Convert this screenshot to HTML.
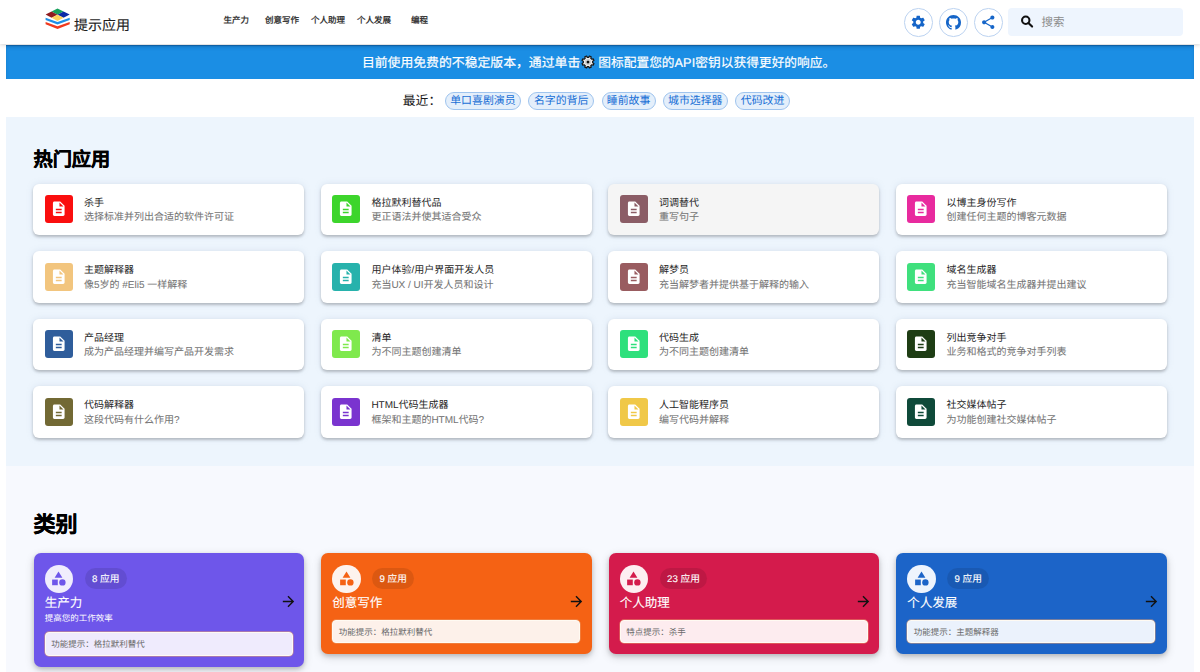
<!DOCTYPE html>
<html lang="zh-CN"><head><meta charset="utf-8">
<style>
*{box-sizing:border-box;margin:0;padding:0}
html,body{width:1200px;height:672px;overflow:hidden;background:#fff;text-rendering:geometricPrecision;font-family:"Liberation Sans",sans-serif;}
.abs{position:absolute}
#hdr{position:absolute;left:0;top:0;width:1200px;height:44px;background:#fff;box-shadow:0 1px 4px rgba(0,0,0,.18);z-index:5}
.logo-t{position:absolute;left:74px;top:15px;font-size:14px;font-weight:500;line-height:20px;color:#1e1e1e;white-space:nowrap;-webkit-text-stroke:0.12px #1e1e1e}
.nav{position:absolute;top:14px;font-size:8.5px;line-height:12px;font-weight:bold;color:#3a3a3a;white-space:nowrap}
.cbtn{position:absolute;top:8px;width:28.5px;height:28.5px;border:1.2px solid #bcd3f1;border-radius:50%;background:#fff}
.cbtn svg{position:absolute;fill:#1565c8}
#search{position:absolute;left:1008px;top:8px;width:175px;height:28px;background:#eef5fe;border-radius:4px}
#banner{position:absolute;left:5.7px;top:44.8px;width:1188.4px;height:33.9px;background:#1b8ee4;box-shadow:inset 0 1px 1px rgba(0,40,90,.3),inset 0 3px 4px -1px rgba(0,40,90,.15)}
#banner .t{position:absolute;top:10.5px;font-size:12.7px;line-height:16px;color:#fff;white-space:nowrap;font-weight:500;-webkit-text-stroke:0.18px #fff}
#recent{position:absolute;left:402.8px;top:92.1px;font-size:12.8px;line-height:17px;color:#1a1a1a;white-space:nowrap}
.chip{position:absolute;top:92.2px;height:17.6px;border:1px solid #9fc4ee;background:#e4effb;border-radius:9px;color:#1a70d6;font-size:10.9px;line-height:17.8px;-webkit-text-stroke:0.03px #1a70d6;text-align:center;white-space:nowrap}
#sec1{position:absolute;left:6px;top:117px;width:1188px;height:348.5px;background:#edf5fd}
#sec2{position:absolute;left:6px;top:465.5px;width:1188px;height:220px;background:#f7f9fe}
.h2{position:absolute;font-weight:bold;color:#000;white-space:nowrap;-webkit-text-stroke:0.35px #000}
.card{position:absolute;width:271px;height:51.5px;background:#fff;border-radius:6px;box-shadow:0 2px 3px rgba(0,0,0,.22),0 0 6px rgba(160,175,200,.25)}
.card.hov{background:#f5f5f5}
.card .ic{position:absolute;left:11.5px;top:11.2px;width:28px;height:28px;border-radius:3px}
.card .ic svg{position:absolute;left:4.8px;top:5px;width:17.5px;height:17.5px;fill:#fff}
.card .tt{position:absolute;left:50.6px;top:13px;font-size:10px;line-height:14px;color:#262626;white-space:nowrap}
.card .ds{position:absolute;left:50.6px;top:27.6px;font-size:10px;line-height:14px;color:#747474;-webkit-text-stroke:0.05px #747474;white-space:nowrap}
.cat{position:absolute;top:553px;width:270.7px;height:100.5px;border-radius:7px;box-shadow:0 3px 10px rgba(0,0,0,.16),0 2px 4px rgba(0,0,0,.16)}
.cat .circ{position:absolute;left:11.3px;top:11.6px;width:28.4px;height:28.4px;border-radius:50%}
.cat .circ svg{position:absolute;left:5.34px;top:5.7px;width:17px;height:17px}
.cat .pill{position:absolute;left:51px;top:14.8px;height:21.5px;padding:0 7.35px;border-radius:11px;background:rgba(0,0,0,.1);color:#fff;font-size:9.7px;line-height:23.5px;white-space:nowrap;-webkit-text-stroke:0.12px #fff}
.cat .ct{position:absolute;left:11px;top:40.5px;font-size:12.5px;line-height:18px;color:#fff;white-space:nowrap;-webkit-text-stroke:0.12px #fff}
.cat .cd{position:absolute;left:11px;top:59.3px;font-size:8.5px;line-height:12px;color:#fff;white-space:nowrap}
.cat .arr{position:absolute;left:246.4px;top:39.7px;width:17px;height:17px}
.cat .tip{position:absolute;left:11.3px;width:248px;height:23.5px;border-radius:4px;font-size:8.5px;line-height:22px;color:#6a6a6a;padding-left:5.2px;white-space:nowrap;border:1px solid #fffaf2;box-shadow:0 0 0 .7px rgba(235,160,110,.6)}
</style></head><body>
<div id="hdr">
  <svg class="abs" style="left:40px;top:5px" width="35" height="28" viewBox="40 5 35 28">
    <polygon points="45.6,17.7 57.5,22 69.7,17.7 69.7,20.1 57.5,24.6 45.6,20.1" fill="#1e8fe6"/>
    <polygon points="45.6,21.9 57.5,26.3 69.7,21.9 69.7,24.3 57.5,29 45.6,24.3" fill="#f03a1e"/>
    <polygon points="57.5,8.4 63.55,11.4 57.5,14.65 51.55,11.4" fill="#16a05c"/>
    <polygon points="63.55,11.4 69.7,14.4 63.55,17.65 57.5,14.65" fill="#0b2aa6"/>
    <polygon points="51.55,11.4 57.5,14.65 51.55,17.65 45.6,14.4" fill="#8e1b1f"/>
    <polygon points="57.5,14.65 63.55,17.65 57.5,20.9 51.55,17.65" fill="#fdd35c"/>
  </svg>
  <div class="logo-t">提示应用</div>
  <div class="nav" style="left:223.5px">生产力</div>
  <div class="nav" style="left:265px">创意写作</div>
  <div class="nav" style="left:311px">个人助理</div>
  <div class="nav" style="left:357px">个人发展</div>
  <div class="nav" style="left:411px">编程</div>
  <div class="cbtn" style="left:904px"><svg style="left:5px;top:5px" width="16.5" height="16.5" viewBox="0 0 24 24"><path d="M19.14 12.94c.04-.3.06-.61.06-.94 0-.32-.02-.64-.07-.94l2.03-1.58c.18-.14.23-.41.12-.61l-1.92-3.32c-.12-.22-.37-.29-.59-.22l-2.39.96c-.5-.38-1.030-.7-1.62-.94l-.36-2.54c-.04-.24-.24-.41-.48-.41h-3.84c-.24 0-.43.17-.47.41l-.36 2.54c-.59.24-1.13.57-1.62.94l-2.39-.96c-.22-.08-.47 0-.59.22L2.74 8.87c-.12.21-.08.47.12.61l2.030 1.58c-.05.3-.09.63-.09.94s.02.64.07.94l-2.03 1.58c-.18.14-.23.41-.12.61l1.92 3.32c.12.22.37.29.59.22l2.39-.96c.5.38 1.03.7 1.62.94l.36 2.54c.05.24.24.41.48.41h3.84c.24 0 .44-.17.47-.41l.36-2.54c.59-.24 1.13-.56 1.62-.94l2.39.96c.22.08.47 0 .59-.22l1.92-3.32c.12-.22.07-.47-.12-.61l-2.01-1.58zM12 15.6c-1.98 0-3.6-1.62-3.6-3.6s1.62-3.6 3.6-3.6 3.6 1.62 3.6 3.6-1.620 3.6-3.6 3.6z"/></svg></div>
  <div class="cbtn" style="left:939px"><svg style="left:5.9px;top:5.9px" width="15" height="15" viewBox="0 0 16 16"><path d="M8 0C3.58 0 0 3.58 0 8c0 3.54 2.29 6.53 5.470 7.59.4.07.55-.17.55-.38 0-.19-.01-.82-.01-1.49-2.01.37-2.53-.49-2.69-.94-.09-.23-.48-.94-.82-1.13-.28-.15-.68-.52-.01-.53.63-.01 1.08.58 1.23.82.72 1.21 1.87.87 2.33.66.07-.52.28-.87.51-1.07-1.78-.2-3.64-.89-3.64-3.95 0-.87.31-1.59.82-2.15-.08-.2-.36-1.02.08-2.12 0 0 .67-.21 2.2.82.64-.18 1.32-.27 2-.27.68 0 1.36.09 2 .27 1.53-1.04 2.2-.82 2.2-.82.44 1.1.16 1.92.08 2.12.51.56.82 1.27.82 2.15 0 3.07-1.87 3.75-3.65 3.95.29.25.54.73.54 1.48 0 1.07-.01 1.93-.01 2.2 0 .21.15.46.55.38A8.013 8.013 0 0016 8c0-4.42-3.58-8-8-8z"/></svg></div>
  <div class="cbtn" style="left:974px"><svg style="left:5px;top:5px" width="16.5" height="16.5" viewBox="0 0 24 24"><path d="M18 16.08c-.76 0-1.44.3-1.96.77L8.91 12.7c.05-.23.09-.46.09-.7s-.04-.47-.09-.7l7.05-4.11c.54.5 1.25.81 2.04.81 1.66 0 3-1.34 3-3s-1.34-3-3-3-3 1.34-3 3c0 .24.04.47.09.7L8.04 9.81C7.5 9.31 6.79 9 6 9c-1.66 0-3 1.34-3 3s1.34 3 3 3c.79 0 1.5-.31 2.040-.81l7.12 4.16c-.05.21-.08.43-.08.65 0 1.61 1.31 2.92 2.92 2.920 1.61 0 2.92-1.31 2.92-2.92s-1.31-2.92-2.92-2.92z"/></svg></div>
  <div id="search">
    <svg class="abs" style="left:0;top:0" width="30" height="28" viewBox="0 0 30 28"><circle cx="17.75" cy="12.25" r="3.7" fill="none" stroke="#111" stroke-width="2.1"/><line x1="20.4" y1="14.9" x2="24.1" y2="18.6" stroke="#111" stroke-width="2.1" stroke-linecap="round"/></svg>
    <div class="abs" style="left:33.4px;top:7px;font-size:11.5px;line-height:16px;color:#8a8a8a">搜索</div>
  </div>
</div>
<div id="banner"><div class="t" style="left:356.2px;font-size:12.85px">目前使用免费的不稳定版本，通过单击</div><svg class="abs" style="left:575.8px;top:10.5px" width="14" height="14" viewBox="0 0 14 14"><path d="M11.70,7.00 L11.64,7.74 L12.93,8.42 L12.20,10.19 L10.80,9.76 L10.32,10.32 L9.76,10.80 L10.19,12.20 L8.42,12.93 L7.74,11.64 L7.00,11.70 L6.26,11.64 L5.58,12.93 L3.81,12.20 L4.24,10.80 L3.68,10.32 L3.20,9.76 L1.80,10.19 L1.07,8.42 L2.36,7.74 L2.30,7.00 L2.36,6.26 L1.07,5.58 L1.80,3.81 L3.20,4.24 L3.68,3.68 L4.24,3.20 L3.81,1.80 L5.58,1.07 L6.26,2.36 L7.00,2.30 L7.74,2.36 L8.42,1.07 L10.19,1.80 L9.76,3.20 L10.32,3.68 L10.80,4.24 L12.20,3.81 L12.93,5.58 L11.64,6.26Z" fill="#ececec" stroke="#161616" stroke-width="1.2" stroke-linejoin="round"/><circle cx="7" cy="7" r="2.6" fill="none" stroke="#c4c4c4" stroke-width=".8"/><circle cx="7" cy="7" r="1.5" fill="#111"/></svg><div class="t" style="left:592.5px;letter-spacing:0.05px">图标配置您的API密钥以获得更好的响应。</div></div>
<div id="recent">最近：</div>
<div class="chip" style="left:444.6px;width:76.6px">单口喜剧演员</div>
<div class="chip" style="left:528.3px;width:65.8px">名字的背后</div>
<div class="chip" style="left:601.5px;width:54.2px">睡前故事</div>
<div class="chip" style="left:662.5px;width:65.5px">城市选择器</div>
<div class="chip" style="left:735.2px;width:54.7px">代码改进</div>

<div id="sec1"></div>
<div class="h2" style="left:33.5px;top:148.6px;font-size:19.2px;line-height:24px">热门应用</div>

<div id="sec2"></div>
<div class="h2" style="left:33.5px;top:511px;font-size:22px;line-height:28px">类别</div>

<div class="card" style="left:33.3px;top:183.9px"><div class="ic" style="background:#fa0e0e"><svg viewBox="0 0 24 24"><path d="M14 2H6c-1.1 0-1.99.9-1.99 2L4 20c0 1.1.89 2 1.99 2H18c1.1 0 2-.9 2-2V8l-6-6zm2 16H8v-2h8v2zm0-4H8v-2h8v2zm-3-5V3.5L18.5 9H13z"/></svg></div><div class="tt">杀手</div><div class="ds">选择标准并列出合适的软件许可证</div></div>
<div class="card" style="left:320.8px;top:183.9px"><div class="ic" style="background:#3dd52c"><svg viewBox="0 0 24 24"><path d="M14 2H6c-1.1 0-1.99.9-1.99 2L4 20c0 1.1.89 2 1.99 2H18c1.1 0 2-.9 2-2V8l-6-6zm2 16H8v-2h8v2zm0-4H8v-2h8v2zm-3-5V3.5L18.5 9H13z"/></svg></div><div class="tt">格拉默利替代品</div><div class="ds">更正语法并使其适合受众</div></div>
<div class="card hov" style="left:608.3px;top:183.9px"><div class="ic" style="background:#8b5d66"><svg viewBox="0 0 24 24"><path d="M14 2H6c-1.1 0-1.99.9-1.99 2L4 20c0 1.1.89 2 1.99 2H18c1.1 0 2-.9 2-2V8l-6-6zm2 16H8v-2h8v2zm0-4H8v-2h8v2zm-3-5V3.5L18.5 9H13z"/></svg></div><div class="tt">词调替代</div><div class="ds">重写句子</div></div>
<div class="card" style="left:895.8px;top:183.9px"><div class="ic" style="background:#e82a9e"><svg viewBox="0 0 24 24"><path d="M14 2H6c-1.1 0-1.99.9-1.99 2L4 20c0 1.1.89 2 1.99 2H18c1.1 0 2-.9 2-2V8l-6-6zm2 16H8v-2h8v2zm0-4H8v-2h8v2zm-3-5V3.5L18.5 9H13z"/></svg></div><div class="tt">以博主身份写作</div><div class="ds">创建任何主题的博客元数据</div></div>
<div class="card" style="left:33.3px;top:251.4px"><div class="ic" style="background:#f2c57e"><svg viewBox="0 0 24 24"><path d="M14 2H6c-1.1 0-1.99.9-1.99 2L4 20c0 1.1.89 2 1.99 2H18c1.1 0 2-.9 2-2V8l-6-6zm2 16H8v-2h8v2zm0-4H8v-2h8v2zm-3-5V3.5L18.5 9H13z"/></svg></div><div class="tt">主题解释器</div><div class="ds">像5岁的 #Eli5 一样解释</div></div>
<div class="card" style="left:320.8px;top:251.4px"><div class="ic" style="background:#27b2ac"><svg viewBox="0 0 24 24"><path d="M14 2H6c-1.1 0-1.99.9-1.99 2L4 20c0 1.1.89 2 1.99 2H18c1.1 0 2-.9 2-2V8l-6-6zm2 16H8v-2h8v2zm0-4H8v-2h8v2zm-3-5V3.5L18.5 9H13z"/></svg></div><div class="tt">用户体验/用户界面开发人员</div><div class="ds">充当UX / UI开发人员和设计</div></div>
<div class="card" style="left:608.3px;top:251.4px"><div class="ic" style="background:#995c60"><svg viewBox="0 0 24 24"><path d="M14 2H6c-1.1 0-1.99.9-1.99 2L4 20c0 1.1.89 2 1.99 2H18c1.1 0 2-.9 2-2V8l-6-6zm2 16H8v-2h8v2zm0-4H8v-2h8v2zm-3-5V3.5L18.5 9H13z"/></svg></div><div class="tt">解梦员</div><div class="ds">充当解梦者并提供基于解释的输入</div></div>
<div class="card" style="left:895.8px;top:251.4px"><div class="ic" style="background:#3fe07d"><svg viewBox="0 0 24 24"><path d="M14 2H6c-1.1 0-1.99.9-1.99 2L4 20c0 1.1.89 2 1.99 2H18c1.1 0 2-.9 2-2V8l-6-6zm2 16H8v-2h8v2zm0-4H8v-2h8v2zm-3-5V3.5L18.5 9H13z"/></svg></div><div class="tt">域名生成器</div><div class="ds">充当智能域名生成器并提出建议</div></div>
<div class="card" style="left:33.3px;top:318.9px"><div class="ic" style="background:#2f5d9b"><svg viewBox="0 0 24 24"><path d="M14 2H6c-1.1 0-1.99.9-1.99 2L4 20c0 1.1.89 2 1.99 2H18c1.1 0 2-.9 2-2V8l-6-6zm2 16H8v-2h8v2zm0-4H8v-2h8v2zm-3-5V3.5L18.5 9H13z"/></svg></div><div class="tt">产品经理</div><div class="ds">成为产品经理并编写产品开发需求</div></div>
<div class="card" style="left:320.8px;top:318.9px"><div class="ic" style="background:#7fe94d"><svg viewBox="0 0 24 24"><path d="M14 2H6c-1.1 0-1.99.9-1.99 2L4 20c0 1.1.89 2 1.99 2H18c1.1 0 2-.9 2-2V8l-6-6zm2 16H8v-2h8v2zm0-4H8v-2h8v2zm-3-5V3.5L18.5 9H13z"/></svg></div><div class="tt">清单</div><div class="ds">为不同主题创建清单</div></div>
<div class="card" style="left:608.3px;top:318.9px"><div class="ic" style="background:#2ee07c"><svg viewBox="0 0 24 24"><path d="M14 2H6c-1.1 0-1.99.9-1.99 2L4 20c0 1.1.89 2 1.99 2H18c1.1 0 2-.9 2-2V8l-6-6zm2 16H8v-2h8v2zm0-4H8v-2h8v2zm-3-5V3.5L18.5 9H13z"/></svg></div><div class="tt">代码生成</div><div class="ds">为不同主题创建清单</div></div>
<div class="card" style="left:895.8px;top:318.9px"><div class="ic" style="background:#1e3d14"><svg viewBox="0 0 24 24"><path d="M14 2H6c-1.1 0-1.99.9-1.99 2L4 20c0 1.1.89 2 1.99 2H18c1.1 0 2-.9 2-2V8l-6-6zm2 16H8v-2h8v2zm0-4H8v-2h8v2zm-3-5V3.5L18.5 9H13z"/></svg></div><div class="tt">列出竞争对手</div><div class="ds">业务和格式的竞争对手列表</div></div>
<div class="card" style="left:33.3px;top:386.4px"><div class="ic" style="background:#726934"><svg viewBox="0 0 24 24"><path d="M14 2H6c-1.1 0-1.99.9-1.99 2L4 20c0 1.1.89 2 1.99 2H18c1.1 0 2-.9 2-2V8l-6-6zm2 16H8v-2h8v2zm0-4H8v-2h8v2zm-3-5V3.5L18.5 9H13z"/></svg></div><div class="tt">代码解释器</div><div class="ds">这段代码有什么作用?</div></div>
<div class="card" style="left:320.8px;top:386.4px"><div class="ic" style="background:#7a34cf"><svg viewBox="0 0 24 24"><path d="M14 2H6c-1.1 0-1.99.9-1.99 2L4 20c0 1.1.89 2 1.99 2H18c1.1 0 2-.9 2-2V8l-6-6zm2 16H8v-2h8v2zm0-4H8v-2h8v2zm-3-5V3.5L18.5 9H13z"/></svg></div><div class="tt">HTML代码生成器</div><div class="ds">框架和主题的HTML代码?</div></div>
<div class="card" style="left:608.3px;top:386.4px"><div class="ic" style="background:#f0c848"><svg viewBox="0 0 24 24"><path d="M14 2H6c-1.1 0-1.99.9-1.99 2L4 20c0 1.1.89 2 1.99 2H18c1.1 0 2-.9 2-2V8l-6-6zm2 16H8v-2h8v2zm0-4H8v-2h8v2zm-3-5V3.5L18.5 9H13z"/></svg></div><div class="tt">人工智能程序员</div><div class="ds">编写代码并解释</div></div>
<div class="card" style="left:895.8px;top:386.4px"><div class="ic" style="background:#0f4a3a"><svg viewBox="0 0 24 24"><path d="M14 2H6c-1.1 0-1.99.9-1.99 2L4 20c0 1.1.89 2 1.99 2H18c1.1 0 2-.9 2-2V8l-6-6zm2 16H8v-2h8v2zm0-4H8v-2h8v2zm-3-5V3.5L18.5 9H13z"/></svg></div><div class="tt">社交媒体帖子</div><div class="ds">为功能创建社交媒体帖子</div></div>
<div class="cat" style="left:33.7px;height:113.5px;background:#6e56ea"><div class="circ" style="background:#f0edfd"><svg viewBox="0 0 24 24"><path fill="#6e56ea" d="M12 2l-5.5 9h11z"/><circle fill="#6e56ea" cx="17.5" cy="17.5" r="4.5"/><path fill="#6e56ea" d="M3 13.5h8v8H3z"/></svg></div><div class="pill">8 应用</div><div class="ct">生产力</div><div class="cd">提高您的工作效率</div><svg class="arr" viewBox="0 0 24 24"><path fill="#111" d="M12 4l-1.41 1.41L16.17 11H4v2h12.17l-5.58 5.59L12 20l8-8z"/></svg><div class="tip" style="top:79px;background:#efebfd">功能提示：格拉默利替代</div></div>
<div class="cat" style="left:321.2px;height:100.5px;background:#f56214"><div class="circ" style="background:#fdf3ee"><svg viewBox="0 0 24 24"><path fill="#f56214" d="M12 2l-5.5 9h11z"/><circle fill="#f56214" cx="17.5" cy="17.5" r="4.5"/><path fill="#f56214" d="M3 13.5h8v8H3z"/></svg></div><div class="pill">9 应用</div><div class="ct">创意写作</div><svg class="arr" viewBox="0 0 24 24"><path fill="#111" d="M12 4l-1.41 1.41L16.17 11H4v2h12.17l-5.58 5.59L12 20l8-8z"/></svg><div class="tip" style="top:66.6px;background:#fdf1ea">功能提示：格拉默利替代</div></div>
<div class="cat" style="left:608.7px;height:100.5px;background:#d41b4c"><div class="circ" style="background:#fdeef1"><svg viewBox="0 0 24 24"><path fill="#d41b4c" d="M12 2l-5.5 9h11z"/><circle fill="#d41b4c" cx="17.5" cy="17.5" r="4.5"/><path fill="#d41b4c" d="M3 13.5h8v8H3z"/></svg></div><div class="pill">23 应用</div><div class="ct">个人助理</div><svg class="arr" viewBox="0 0 24 24"><path fill="#111" d="M12 4l-1.41 1.41L16.17 11H4v2h12.17l-5.58 5.59L12 20l8-8z"/></svg><div class="tip" style="top:66.6px;background:#fdecef">特点提示：杀手</div></div>
<div class="cat" style="left:896.2px;height:100.5px;background:#1c64c8"><div class="circ" style="background:#eef4fd"><svg viewBox="0 0 24 24"><path fill="#1c64c8" d="M12 2l-5.5 9h11z"/><circle fill="#1c64c8" cx="17.5" cy="17.5" r="4.5"/><path fill="#1c64c8" d="M3 13.5h8v8H3z"/></svg></div><div class="pill">9 应用</div><div class="ct">个人发展</div><svg class="arr" viewBox="0 0 24 24"><path fill="#111" d="M12 4l-1.41 1.41L16.17 11H4v2h12.17l-5.58 5.59L12 20l8-8z"/></svg><div class="tip" style="top:66.6px;background:#ebf2fc">功能提示：主题解释器</div></div>
</body></html>
